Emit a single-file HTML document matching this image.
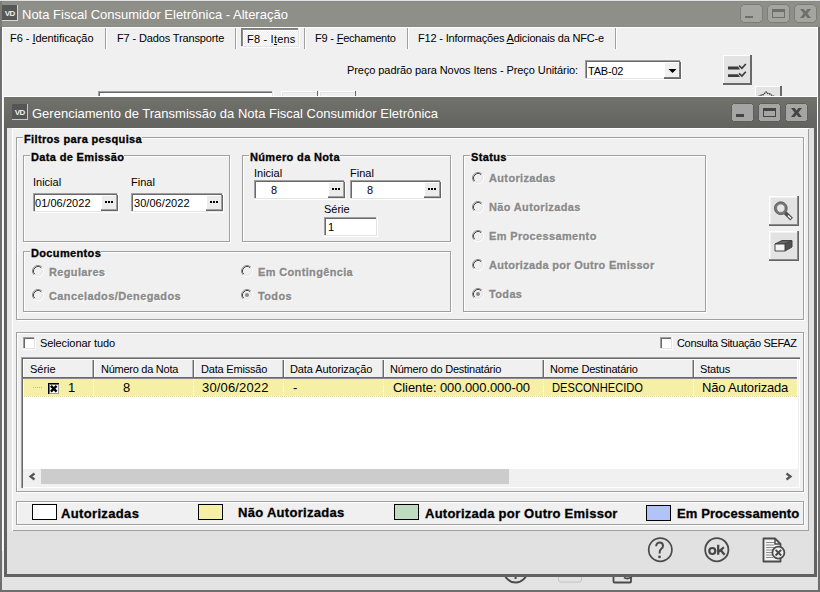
<!DOCTYPE html>
<html><head><meta charset="utf-8">
<style>
*{margin:0;padding:0;box-sizing:border-box}
html,body{width:820px;height:592px;overflow:hidden}
body{position:relative;background:#f0f0f0;font-family:"Liberation Sans",sans-serif;font-size:11px;color:#000}
.a{position:absolute}
.t{position:absolute;white-space:nowrap;line-height:11px;font-size:11px}
.b{font-weight:bold;letter-spacing:0.35px;-webkit-text-stroke-width:0.3px}
.dis{color:#8a8a8a;text-shadow:1px 1px 0 #fff}
.sunk{position:absolute;background:#fff;box-shadow:inset -1px -1px #fff,inset -2px -2px #e3e3e3,inset 1px 1px #a0a0a0,inset 2px 2px #696969}
.rais{position:absolute;background:#e3e3e3;box-shadow:inset -1px -1px #696969,inset -2px -2px #a0a0a0,inset 1px 1px #fff}
.grp{position:absolute;border:1px solid #a0a0a0;box-shadow:inset 1px 1px #fff,1px 1px #fff}
.cap{position:absolute;background:#f0f0f0;padding:0 0 0 1px}
.sep{position:absolute;width:2px;border-left:1px solid #a0a0a0;border-right:1px solid #fff}
.radio{position:absolute;width:12px;height:12px}
.ell{position:absolute;width:17px;height:16px}
.ell{background:#ececec}
.ell i{position:absolute;top:6px;width:2px;height:2px;background:#000}
</style></head><body>

<!-- OUTER WINDOW -->
<div class="a" style="left:0;top:0;width:820px;height:592px;background:#6e6e6e"></div>
<div class="a" style="left:0;top:0;width:820px;height:1px;background:#e2e2e2"></div>
<div class="a" style="left:0;top:1px;width:820px;height:26px;background:#8f8f8a;box-shadow:inset 0 1px #89898a,inset 0 -1px #8a8a86"></div><div class="a" style="left:0;top:1px;width:2px;height:26px;background:#7b7b77"></div>
<div class="a" style="left:2px;top:27px;width:816px;height:563px;background:#f0f0f0;box-shadow:inset 0 1px #fff"></div><div class="a" style="left:2px;top:27px;width:1px;height:524px;background:#fff"></div><div class="a" style="left:2px;top:551px;width:1px;height:39px;background:#e3e3e3"></div><div class="a" style="left:817px;top:27px;width:1px;height:524px;background:#fff"></div><div class="a" style="left:817px;top:551px;width:1px;height:39px;background:#e3e3e3"></div>
<!-- outer icon -->
<div class="a" style="left:2px;top:5px;width:16px;height:16px;background:#d8d8d8"></div>
<div class="a" style="left:2px;top:5px;width:15px;height:15px;background:#575757"></div>
<svg class="a" style="left:0;top:0" width="20" height="22"><text x="4.8" y="15.8" font-family="Liberation Sans" font-weight="bold" font-size="8" letter-spacing="-0.7" fill="#f0f0f0">VD</text></svg>
<div class="t" style="left:22px;top:8px;font-size:13px;line-height:13px;color:#fff">Nota Fiscal Consumidor Eletrônica - Alteração</div>
<!-- outer title buttons -->
<svg class="a" style="left:740px;top:4px" width="78" height="20">
 <g fill="#a4a4a0" stroke="#7c7c78" stroke-width="1">
  <path d="M3.5,0.5 H19.5 L22.5,3.5 V15.5 L19.5,18.5 H3.5 L0.5,15.5 V3.5 Z"/>
  <path d="M30.5,0.5 H46.5 L49.5,3.5 V15.5 L46.5,18.5 H30.5 L27.5,15.5 V3.5 Z"/>
  <path d="M57.5,0.5 H73.5 L76.5,3.5 V15.5 L73.5,18.5 H57.5 L54.5,15.5 V3.5 Z"/>
 </g>
 <rect x="5" y="12" width="8" height="2" fill="#6e6e6a"/>
 <rect x="32.5" y="5.5" width="12" height="8" fill="none" stroke="#6e6e6a" stroke-width="1"/>
 <rect x="32" y="5" width="13" height="3" fill="#6e6e6a"/>
 <path d="M60,5 H63.6 L65.5,7.6 L67.4,5 H71 L67.4,9.5 L71,14 H67.4 L65.5,11.4 L63.6,14 H60 L63.6,9.5 Z" fill="#6e6e6a"/>
</svg>

<!-- tabs -->
<div class="t" style="left:10px;top:33px;letter-spacing:-0.05px">F6 - <u>I</u>dentificação</div>
<div class="sep" style="left:105px;top:28px;height:21px"></div>
<div class="t" style="left:117px;top:33px;letter-spacing:-0.14px">F7 - Dados Transporte</div>
<div class="sep" style="left:235px;top:28px;height:21px"></div>
<div class="a" style="left:241px;top:28px;width:59px;height:20px;background:repeating-conic-gradient(#fff 0 25%,#ececec 0 50%) 0 0/2px 2px;box-shadow:inset -1px -1px #fff,inset -2px -2px #e3e3e3,inset 1px 1px #7a7a7a,inset 2px 2px #8a8a8a,inset 3px 3px #fff"></div>
<div class="t" style="left:247px;top:34px;letter-spacing:0.2px">F8 - I<u>t</u>ens</div>
<div class="sep" style="left:304px;top:28px;height:21px"></div>
<div class="t" style="left:315px;top:33px;letter-spacing:-0.2px">F9 - <u>F</u>echamento</div>
<div class="sep" style="left:407px;top:28px;height:21px"></div>
<div class="t" style="left:418px;top:33px;letter-spacing:-0.18px">F12 - Informações <u>A</u>dicionais da NFC-e</div>
<div class="sep" style="left:615px;top:28px;height:21px"></div>

<div class="t" style="left:347px;top:65px;letter-spacing:-0.08px">Preço padrão para Novos Itens - Preço Unitário:</div>
<div class="sunk" style="left:585px;top:60px;width:97px;height:20px"></div>
<div class="t" style="left:588px;top:66px;letter-spacing:-0.2px">TAB-02</div>
<div class="rais" style="left:664px;top:62px;width:17px;height:17px;background:#f0f0f0;box-shadow:inset -1px -1px #696969,inset -2px -2px #7a7a7a,inset 1px 1px #fff"></div>
<svg class="a" style="left:664px;top:62px" width="17" height="17"><path d="M4.5,7 H12.5 L8.5,11 Z" fill="#000"/></svg>
<div class="rais" style="left:723px;top:55px;width:29px;height:30px;box-shadow:inset -2px -2px #696969,inset 1px 1px #fff"></div>
<svg class="a" style="left:723px;top:55px" width="29" height="30">
 <path d="M5,11.6 H15 L17,14.6 H5 Z" fill="#3c3c3c"/>
 <path d="M5,19.2 H15 L17,22 H5 Z" fill="#3c3c3c"/>
 <path d="M16,10.6 L18.9,13.3 L22.8,9 M16,18.4 L18.9,21.1 L22.8,16.8" fill="none" stroke="#3c3c3c" stroke-width="1.7"/>
</svg>
<!-- partial widgets behind dialog -->
<div class="sunk" style="left:98px;top:91px;width:176px;height:10px"></div>
<div class="rais" style="left:281px;top:91px;width:37px;height:10px;background:#f0f0f0;box-shadow:inset -1px -1px #696969,inset 1px 1px #fff,inset 2px 2px #e3e3e3"></div>
<div class="rais" style="left:319px;top:91px;width:37px;height:10px;background:#f0f0f0;box-shadow:inset -1px -1px #696969,inset 1px 1px #fff,inset 2px 2px #e3e3e3"></div>
<div class="rais" style="left:755px;top:86px;width:27px;height:16px;box-shadow:inset -2px -2px #696969,inset 1px 1px #fff"></div><svg class="a" style="left:755px;top:86px" width="27" height="11"><path d="M3.5,10.5 L6.5,9 L8.5,8.5 L11,6 L13,7.5 L15,8 L17,9.5 L19,10.5" fill="none" stroke="#444" stroke-width="1.4" stroke-dasharray="1.5 0.6"/></svg>

<div class="a" style="left:32px;top:96px;width:1px;height:1px;background:#223"></div><div class="a" style="left:74px;top:96px;width:1px;height:1px;background:#223"></div>
<div class="a" style="left:3px;top:96px;width:814px;height:1px;background:#fff"></div>
<!-- INNER DIALOG -->
<div class="a" style="left:4px;top:97px;width:813px;height:480px;background:#626262"></div>
<div class="a" style="left:4px;top:97px;width:813px;height:31px;background:linear-gradient(#72726d,#62625f)"></div>
<div class="a" style="left:12px;top:104px;width:16px;height:16px;background:#c8c8c8"></div>
<div class="a" style="left:12px;top:104px;width:15px;height:15px;background:#555"></div>
<svg class="a" style="left:10px;top:99px" width="20" height="22"><text x="4.8" y="15.8" font-family="Liberation Sans" font-weight="bold" font-size="8" letter-spacing="-0.7" fill="#f0f0f0">VD</text></svg>
<div class="t" style="left:32px;top:107px;font-size:13px;line-height:13px;color:#fff">Gerenciamento de Transmissão da Nota Fiscal Consumidor Eletrônica</div>
<svg class="a" style="left:731px;top:103px" width="78" height="20">
 <g fill="#a5a5a3" stroke="#5d5d5a" stroke-width="1">
  <path d="M2.5,0.5 H20.5 L22.5,2.5 V16.5 L20.5,18.5 H2.5 L0.5,16.5 V2.5 Z"/>
  <path d="M29.5,0.5 H47.5 L49.5,2.5 V16.5 L47.5,18.5 H29.5 L27.5,16.5 V2.5 Z"/>
  <path d="M56.5,0.5 H74.5 L76.5,2.5 V16.5 L74.5,18.5 H56.5 L54.5,16.5 V2.5 Z"/>
 </g>
 <rect x="5" y="11" width="8" height="3" fill="#444"/>
 <rect x="32.5" y="5.5" width="12" height="8" fill="none" stroke="#444" stroke-width="1"/>
 <rect x="32" y="5" width="13" height="3" fill="#444"/>
 <path d="M60,5 H63.6 L65.5,7.6 L67.4,5 H71 L67.4,9.5 L71,14 H67.4 L65.5,11.4 L63.6,14 H60 L63.6,9.5 Z" fill="#444"/>
</svg>
<!-- client -->
<div class="a" style="left:7px;top:128px;width:807px;height:446px;background:#e1e1e1"></div>
<div class="a" style="left:7px;top:128px;width:802px;height:403px;background:#e6e6e6"></div>
<div class="a" style="left:12px;top:128px;width:797px;height:403px;background:#f0f0f0;box-shadow:inset 1px 1px #fff,inset -1px -1px #a0a0a0"></div>

<!-- Filtros group -->
<div class="grp" style="left:16px;top:137px;width:788px;height:183px"></div>
<div class="t b cap" style="left:23px;top:134px">Filtros para pesquisa</div>

<!-- Data de Emissao -->
<div class="grp" style="left:23px;top:155px;width:207px;height:87px"></div>
<div class="t b cap" style="left:30px;top:152px">Data de Emissão</div>
<div class="t" style="left:33px;top:177px">Inicial</div>
<div class="t" style="left:131px;top:177px">Final</div>
<div class="sunk" style="left:33px;top:193px;width:86px;height:20px"></div>
<div class="t" style="left:35px;top:198px;letter-spacing:0.05px">01/06/2022</div>
<div class="rais ell" style="left:101px;top:195px"><i style="left:4px"></i><i style="left:7px"></i><i style="left:10px"></i></div>
<div class="sunk" style="left:131px;top:193px;width:93px;height:20px"></div>
<div class="t" style="left:134px;top:198px;letter-spacing:0.05px">30/06/2022</div>
<div class="rais ell" style="left:206px;top:195px"><i style="left:4px"></i><i style="left:7px"></i><i style="left:10px"></i></div>

<!-- Numero da Nota -->
<div class="grp" style="left:242px;top:155px;width:209px;height:87px"></div>
<div class="t b cap" style="left:249px;top:152px">Número da Nota</div>
<div class="t" style="left:254px;top:168px">Inicial</div>
<div class="t" style="left:350px;top:168px">Final</div>
<div class="sunk" style="left:254px;top:180px;width:92px;height:20px"></div>
<div class="t" style="left:271px;top:185px">8</div>
<div class="rais ell" style="left:328px;top:182px"><i style="left:4px"></i><i style="left:7px"></i><i style="left:10px"></i></div>
<div class="sunk" style="left:350px;top:180px;width:92px;height:20px"></div>
<div class="t" style="left:367px;top:185px">8</div>
<div class="rais ell" style="left:424px;top:182px"><i style="left:4px"></i><i style="left:7px"></i><i style="left:10px"></i></div>
<div class="t" style="left:324px;top:204px">Série</div>
<div class="sunk" style="left:324px;top:217px;width:54px;height:20px"></div>
<div class="t" style="left:328px;top:222px">1</div>

<!-- Status -->
<div class="grp" style="left:463px;top:155px;width:243px;height:157px"></div>
<div class="t b cap" style="left:470px;top:152px">Status</div>

<svg class="a" style="left:472px;top:172px" width="12" height="12"><circle cx="6" cy="6" r="5" fill="#f0f0f0"/><path d="M2.11,9.89 A5.5,5.5 0 0 1 9.89,2.11" fill="none" stroke="#8a8a8a" stroke-width="1"/><path d="M2.82,9.18 A4.5,4.5 0 0 1 9.18,2.82" fill="none" stroke="#454545" stroke-width="1"/><path d="M9.89,2.11 A5.5,5.5 0 0 1 2.11,9.89" fill="none" stroke="#fff" stroke-width="1"/><path d="M9.18,2.82 A4.5,4.5 0 0 1 2.82,9.18" fill="none" stroke="#e3e3e3" stroke-width="1"/></svg><svg class="a" style="left:472px;top:201px" width="12" height="12"><circle cx="6" cy="6" r="5" fill="#f0f0f0"/><path d="M2.11,9.89 A5.5,5.5 0 0 1 9.89,2.11" fill="none" stroke="#8a8a8a" stroke-width="1"/><path d="M2.82,9.18 A4.5,4.5 0 0 1 9.18,2.82" fill="none" stroke="#454545" stroke-width="1"/><path d="M9.89,2.11 A5.5,5.5 0 0 1 2.11,9.89" fill="none" stroke="#fff" stroke-width="1"/><path d="M9.18,2.82 A4.5,4.5 0 0 1 2.82,9.18" fill="none" stroke="#e3e3e3" stroke-width="1"/></svg><svg class="a" style="left:472px;top:230px" width="12" height="12"><circle cx="6" cy="6" r="5" fill="#f0f0f0"/><path d="M2.11,9.89 A5.5,5.5 0 0 1 9.89,2.11" fill="none" stroke="#8a8a8a" stroke-width="1"/><path d="M2.82,9.18 A4.5,4.5 0 0 1 9.18,2.82" fill="none" stroke="#454545" stroke-width="1"/><path d="M9.89,2.11 A5.5,5.5 0 0 1 2.11,9.89" fill="none" stroke="#fff" stroke-width="1"/><path d="M9.18,2.82 A4.5,4.5 0 0 1 2.82,9.18" fill="none" stroke="#e3e3e3" stroke-width="1"/></svg><svg class="a" style="left:472px;top:259px" width="12" height="12"><circle cx="6" cy="6" r="5" fill="#f0f0f0"/><path d="M2.11,9.89 A5.5,5.5 0 0 1 9.89,2.11" fill="none" stroke="#8a8a8a" stroke-width="1"/><path d="M2.82,9.18 A4.5,4.5 0 0 1 9.18,2.82" fill="none" stroke="#454545" stroke-width="1"/><path d="M9.89,2.11 A5.5,5.5 0 0 1 2.11,9.89" fill="none" stroke="#fff" stroke-width="1"/><path d="M9.18,2.82 A4.5,4.5 0 0 1 2.82,9.18" fill="none" stroke="#e3e3e3" stroke-width="1"/></svg><svg class="a" style="left:472px;top:288px" width="12" height="12"><circle cx="6" cy="6" r="5" fill="#f0f0f0"/><path d="M2.11,9.89 A5.5,5.5 0 0 1 9.89,2.11" fill="none" stroke="#8a8a8a" stroke-width="1"/><path d="M2.82,9.18 A4.5,4.5 0 0 1 9.18,2.82" fill="none" stroke="#454545" stroke-width="1"/><path d="M9.89,2.11 A5.5,5.5 0 0 1 2.11,9.89" fill="none" stroke="#fff" stroke-width="1"/><path d="M9.18,2.82 A4.5,4.5 0 0 1 2.82,9.18" fill="none" stroke="#e3e3e3" stroke-width="1"/><circle cx="6" cy="6" r="2" fill="#8a8a8a"/></svg><svg class="a" style="left:32px;top:265px" width="12" height="12"><circle cx="6" cy="6" r="5" fill="#f0f0f0"/><path d="M2.11,9.89 A5.5,5.5 0 0 1 9.89,2.11" fill="none" stroke="#8a8a8a" stroke-width="1"/><path d="M2.82,9.18 A4.5,4.5 0 0 1 9.18,2.82" fill="none" stroke="#454545" stroke-width="1"/><path d="M9.89,2.11 A5.5,5.5 0 0 1 2.11,9.89" fill="none" stroke="#fff" stroke-width="1"/><path d="M9.18,2.82 A4.5,4.5 0 0 1 2.82,9.18" fill="none" stroke="#e3e3e3" stroke-width="1"/></svg><svg class="a" style="left:32px;top:289px" width="12" height="12"><circle cx="6" cy="6" r="5" fill="#f0f0f0"/><path d="M2.11,9.89 A5.5,5.5 0 0 1 9.89,2.11" fill="none" stroke="#8a8a8a" stroke-width="1"/><path d="M2.82,9.18 A4.5,4.5 0 0 1 9.18,2.82" fill="none" stroke="#454545" stroke-width="1"/><path d="M9.89,2.11 A5.5,5.5 0 0 1 2.11,9.89" fill="none" stroke="#fff" stroke-width="1"/><path d="M9.18,2.82 A4.5,4.5 0 0 1 2.82,9.18" fill="none" stroke="#e3e3e3" stroke-width="1"/></svg><svg class="a" style="left:241px;top:265px" width="12" height="12"><circle cx="6" cy="6" r="5" fill="#f0f0f0"/><path d="M2.11,9.89 A5.5,5.5 0 0 1 9.89,2.11" fill="none" stroke="#8a8a8a" stroke-width="1"/><path d="M2.82,9.18 A4.5,4.5 0 0 1 9.18,2.82" fill="none" stroke="#454545" stroke-width="1"/><path d="M9.89,2.11 A5.5,5.5 0 0 1 2.11,9.89" fill="none" stroke="#fff" stroke-width="1"/><path d="M9.18,2.82 A4.5,4.5 0 0 1 2.82,9.18" fill="none" stroke="#e3e3e3" stroke-width="1"/></svg><svg class="a" style="left:241px;top:289px" width="12" height="12"><circle cx="6" cy="6" r="5" fill="#f0f0f0"/><path d="M2.11,9.89 A5.5,5.5 0 0 1 9.89,2.11" fill="none" stroke="#8a8a8a" stroke-width="1"/><path d="M2.82,9.18 A4.5,4.5 0 0 1 9.18,2.82" fill="none" stroke="#454545" stroke-width="1"/><path d="M9.89,2.11 A5.5,5.5 0 0 1 2.11,9.89" fill="none" stroke="#fff" stroke-width="1"/><path d="M9.18,2.82 A4.5,4.5 0 0 1 2.82,9.18" fill="none" stroke="#e3e3e3" stroke-width="1"/><circle cx="6" cy="6" r="2" fill="#8a8a8a"/></svg>
<div class="t b dis" style="left:489px;top:173px">Autorizadas</div>
<div class="t b dis" style="left:489px;top:202px">Não Autorizadas</div>
<div class="t b dis" style="left:489px;top:231px">Em Processamento</div>
<div class="t b dis" style="left:489px;top:260px;letter-spacing:0.3px">Autorizada por Outro Emissor</div>
<div class="t b dis" style="left:489px;top:289px">Todas</div>

<!-- buttons right -->
<div class="rais" style="left:769px;top:196px;width:30px;height:30px;box-shadow:inset -1px -1px #646464,inset -2px -2px #8a8a8a,inset 1px 1px #fff,inset 2px 2px #f2f2f2"></div>
<svg class="a" style="left:769px;top:196px" width="30" height="30">
 <path d="M16.3,16.8 L22.6,23.1" stroke="#505050" stroke-width="3.8" stroke-linecap="butt"/>
 <path d="M19,19.5 L22,22.5" stroke="#f4f4f4" stroke-width="1.5"/>
 <circle cx="11.8" cy="12.2" r="5.3" fill="#e6e6e6" stroke="#777" stroke-width="2.2"/>
 <circle cx="11.8" cy="12.2" r="6.4" fill="none" stroke="#505050" stroke-width="0.8"/>
 <circle cx="11.8" cy="12.2" r="4.2" fill="none" stroke="#606060" stroke-width="0.6"/>
</svg>
<div class="rais" style="left:769px;top:231px;width:30px;height:30px;box-shadow:inset -1px -1px #646464,inset -2px -2px #8a8a8a,inset 1px 1px #fff,inset 2px 2px #f2f2f2"></div>
<svg class="a" style="left:769px;top:231px" width="30" height="30">
 <path d="M6,13 L13,9.5 H23 L16,13 Z" fill="#666" stroke="#444" stroke-width="1"/>
 <path d="M16,13 L23,9.5 V16 L16,20 Z" fill="#505050" stroke="#444" stroke-width="1"/>
 <path d="M6,13 H16 V20 H6 Z" fill="#f4f4f4" stroke="#444" stroke-width="1"/>
</svg>

<!-- Documentos -->
<div class="grp" style="left:23px;top:251px;width:428px;height:61px"></div>
<div class="t b cap" style="left:30px;top:248px">Documentos</div>
<div class="t b dis" style="left:49px;top:267px">Regulares</div>
<div class="t b dis" style="left:49px;top:291px;letter-spacing:0.4px">Cancelados/Denegados</div>
<div class="t b dis" style="left:258px;top:267px">Em Contingência</div>
<div class="t b dis" style="left:258px;top:291px">Todos</div>

<!-- grid panel -->
<div class="grp" style="left:16px;top:332px;width:788px;height:160px"></div>
<div class="sunk" style="left:23px;top:337px;width:13px;height:13px"></div>
<div class="t" style="left:40px;top:338px;letter-spacing:-0.1px">Selecionar tudo</div>
<div class="sunk" style="left:660px;top:337px;width:13px;height:13px"></div>
<div class="t" style="left:677px;top:338px;letter-spacing:-0.33px">Consulta Situação SEFAZ</div>

<div class="a" style="left:21px;top:357px;width:779px;height:131px;background:#fff;box-shadow:inset 1px 1px #a0a0a0,inset 2px 2px #696969,inset -1px -1px #fff,inset -2px -2px #f0f0f0"></div>
<div class="a" style="left:24px;top:360px;width:773px;height:17px;background:#f0f0f0"></div>
<div class="a" style="left:23px;top:377px;width:774px;height:1px;background:#696969"></div><div class="a" style="left:23px;top:378px;width:774px;height:1px;background:#8a8a8a"></div>
<div class="a" style="left:92px;top:360px;width:1px;height:17px;background:#b4b4b4"></div><div class="a" style="left:93px;top:360px;width:1px;height:18px;background:#696969"></div><div class="a" style="left:94px;top:360px;width:1px;height:17px;background:#fff"></div><div class="a" style="left:192px;top:360px;width:1px;height:17px;background:#b4b4b4"></div><div class="a" style="left:193px;top:360px;width:1px;height:18px;background:#696969"></div><div class="a" style="left:194px;top:360px;width:1px;height:17px;background:#fff"></div><div class="a" style="left:282px;top:360px;width:1px;height:17px;background:#b4b4b4"></div><div class="a" style="left:283px;top:360px;width:1px;height:18px;background:#696969"></div><div class="a" style="left:284px;top:360px;width:1px;height:17px;background:#fff"></div><div class="a" style="left:382px;top:360px;width:1px;height:17px;background:#b4b4b4"></div><div class="a" style="left:383px;top:360px;width:1px;height:18px;background:#696969"></div><div class="a" style="left:384px;top:360px;width:1px;height:17px;background:#fff"></div><div class="a" style="left:542px;top:360px;width:1px;height:17px;background:#b4b4b4"></div><div class="a" style="left:543px;top:360px;width:1px;height:18px;background:#696969"></div><div class="a" style="left:544px;top:360px;width:1px;height:17px;background:#fff"></div><div class="a" style="left:692px;top:360px;width:1px;height:17px;background:#b4b4b4"></div><div class="a" style="left:693px;top:360px;width:1px;height:18px;background:#696969"></div><div class="a" style="left:694px;top:360px;width:1px;height:17px;background:#fff"></div>
<div class="t" style="left:30px;top:364px">Série</div>
<div class="t" style="left:101px;top:364px;letter-spacing:-0.26px">Número da Nota</div>
<div class="t" style="left:201px;top:364px;letter-spacing:-0.2px">Data Emissão</div>
<div class="t" style="left:290px;top:364px;letter-spacing:-0.1px">Data Autorização</div>
<div class="t" style="left:390px;top:364px;letter-spacing:-0.23px">Número do Destinatário</div>
<div class="t" style="left:550px;top:364px;letter-spacing:-0.2px">Nome Destinatário</div>
<div class="t" style="left:700px;top:364px;letter-spacing:-0.2px">Status</div>

<div class="a" style="left:24px;top:379px;width:773px;height:17px;background:#f5f0a6"></div>
<div class="a" style="left:93px;top:379px;width:1px;height:17px;background:repeating-linear-gradient(#fff 0 1px,transparent 1px 2px)"></div><div class="a" style="left:193px;top:379px;width:1px;height:17px;background:repeating-linear-gradient(#fff 0 1px,transparent 1px 2px)"></div><div class="a" style="left:283px;top:379px;width:1px;height:17px;background:repeating-linear-gradient(#fff 0 1px,transparent 1px 2px)"></div><div class="a" style="left:383px;top:379px;width:1px;height:17px;background:repeating-linear-gradient(#fff 0 1px,transparent 1px 2px)"></div><div class="a" style="left:543px;top:379px;width:1px;height:17px;background:repeating-linear-gradient(#fff 0 1px,transparent 1px 2px)"></div><div class="a" style="left:693px;top:379px;width:1px;height:17px;background:repeating-linear-gradient(#fff 0 1px,transparent 1px 2px)"></div><div class="a" style="left:24px;top:396px;width:773px;height:1px;background:repeating-linear-gradient(90deg,#e0dca0 0 1px,transparent 1px 2px)"></div><div class="a" style="left:33px;top:387px;width:10px;height:1px;background:repeating-linear-gradient(90deg,#b4b4b4 0 1px,transparent 1px 2px)"></div><div class="t" style="left:68px;top:381px;font-size:13px;line-height:13px">1</div>
<div class="t" style="left:123px;top:381px;font-size:13px;line-height:13px">8</div>
<div class="t" style="left:202px;top:381px;font-size:13px;line-height:13px;letter-spacing:0.15px">30/06/2022</div>
<div class="t" style="left:293px;top:381px;font-size:13px;line-height:13px">-</div>
<div class="t" style="left:393px;top:381px;font-size:13px;line-height:13px;letter-spacing:-0.08px">Cliente: 000.000.000-00</div>
<div class="t" style="left:552px;top:381px;font-size:13px;line-height:13px;transform:scaleX(0.857);transform-origin:0 0">DESCONHECIDO</div>
<div class="t" style="left:702px;top:381px;font-size:13px;line-height:13px;letter-spacing:-0.2px">Não Autorizada</div>
<div class="a" style="left:48px;top:383px;width:11px;height:11px;background:#fff;box-shadow:inset 1px 1px #000,inset 2px 2px #707070,inset -1px -1px #9a9aa6"></div>
<svg class="a" style="left:48px;top:383px" width="11" height="11"><path d="M2.9,2.9 L8.6,8.6 M8.6,2.9 L2.9,8.6" stroke="#000" stroke-width="2.4" stroke-linecap="butt"/></svg>

<!-- scrollbar -->
<div class="a" style="left:23px;top:469px;width:775px;height:17px;background:#f0f0f0"></div>
<div class="a" style="left:41px;top:469px;width:468px;height:15px;background:#cccccc"></div>
<svg class="a" style="left:23px;top:469px" width="774" height="15">
 <path d="M11.5,4.5 L7.5,7.5 L11.5,10.5" fill="none" stroke="#555" stroke-width="2.2"/>
 <path d="M763.5,4.5 L767.5,7.5 L763.5,10.5" fill="none" stroke="#555" stroke-width="2.2"/>
</svg>

<!-- legend -->
<div class="grp" style="left:16px;top:501px;width:788px;height:24px"></div>
<div class="a" style="left:32px;top:504px;width:25px;height:16px;background:#fff;border:1px solid #000"></div>
<div class="t" style="left:61px;top:507px;font-size:13px;line-height:13px;font-weight:bold;-webkit-text-stroke-width:0.3px;letter-spacing:0.35px">Autorizadas</div>
<div class="a" style="left:198px;top:504px;width:25px;height:16px;background:#f5f0a6;border:1px solid #000"></div>
<div class="t" style="left:238px;top:506px;font-size:13px;line-height:13px;font-weight:bold;-webkit-text-stroke-width:0.3px;letter-spacing:0.3px">Não Autorizadas</div>
<div class="a" style="left:394px;top:504px;width:25px;height:16px;background:#c0dcc0;border:1px solid #000"></div>
<div class="t" style="left:425px;top:507px;font-size:13px;line-height:13px;font-weight:bold;-webkit-text-stroke-width:0.3px;letter-spacing:0.25px">Autorizada por Outro Emissor</div>
<div class="a" style="left:646px;top:505px;width:25px;height:16px;background:#b0c4f8;border:1px solid #000"></div>
<div class="t" style="left:677px;top:507px;font-size:13px;line-height:13px;font-weight:bold;-webkit-text-stroke-width:0.3px;letter-spacing:0.1px">Em Processamento</div>

<!-- bottom icons -->
<svg class="a" style="left:640px;top:530px" width="160" height="44">
 <circle cx="20.3" cy="19.7" r="11.6" fill="none" stroke="#4a4a4a" stroke-width="1.7"/>
 <path d="M16.2,16.2 C16.2,13.8 17.8,12.6 19.6,12.6 C21.6,12.6 23,14 23,15.9 C23,17.8 21.6,18.5 20.6,19.4 C19.8,20.1 19.6,20.8 19.6,23.4" fill="none" stroke="#4a4a4a" stroke-width="2"/><circle cx="19.5" cy="26.9" r="1.4" fill="#4a4a4a"/>
 <circle cx="76.8" cy="19.7" r="11.6" fill="none" stroke="#4a4a4a" stroke-width="1.8"/>
 <circle cx="72.3" cy="21" r="3" fill="none" stroke="#454545" stroke-width="2.2"/><path d="M78.2,14.8 V24.8 M79,21.6 L83.8,17.2 M80.8,20.2 L84.6,24.8" fill="none" stroke="#454545" stroke-width="2.2"/>
 <path d="M123.5,8.5 H135 L140.5,14 V31.5 H123.5 Z" fill="#f4f4f4" stroke="#4a4a4a" stroke-width="1.8" stroke-linejoin="round"/>
 <path d="M135,8.5 V14 H140.5" fill="none" stroke="#4a4a4a" stroke-width="1.5"/>
 <path d="M126,12.5 H134 M126,15 H134 M126,17.5 H136 M126,20 H134 M126,22.5 H132 M126,25 H132 M126,27.5 H133" stroke="#8c8c8c" stroke-width="1"/>
 <circle cx="138.4" cy="22.7" r="6" fill="#f0f0f0" stroke="#4a4a4a" stroke-width="1.8"/>
 <path d="M135.6,19.9 L141.2,25.5 M141.2,19.9 L135.6,25.5" stroke="#4a4a4a" stroke-width="2"/>
</svg>

<!-- below dialog (outer) -->
<div class="a" style="left:2px;top:577px;width:816px;height:13px;background:#e3e3e3"></div>
<svg class="a" style="left:480px;top:577px" width="160" height="13">
 <circle cx="35.6" cy="-6" r="11.5" fill="none" stroke="#4a4a4a" stroke-width="2"/>
 <path d="M35.6,0 V2" stroke="#4a4a4a" stroke-width="2"/>
 <rect x="78.5" y="-10" width="23" height="15" rx="2" fill="none" stroke="#c4c4c4" stroke-width="1"/>
 <path d="M133.5,-4 V4.5 Q133.5,5.5 134.5,5.5 H150 Q151,5.5 151,4.5 V0.5" fill="none" stroke="#4a4a4a" stroke-width="1.8"/><path d="M144,0.5 Q147,2.5 151,0.5 L152,-1" fill="none" stroke="#4a4a4a" stroke-width="1.8"/>
</svg>

</body></html>
